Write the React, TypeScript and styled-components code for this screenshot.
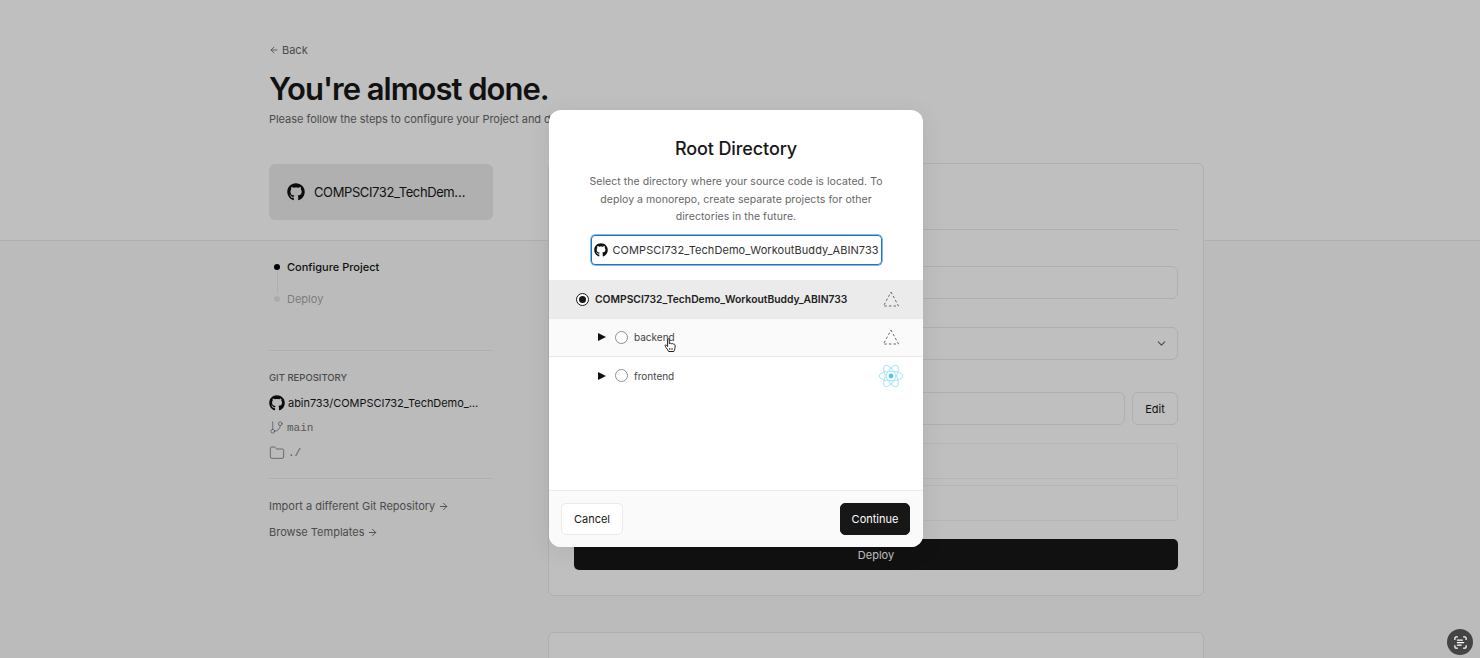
import React from 'react';
import styled, { createGlobalStyle } from 'styled-components';
import { FaGithub } from 'react-icons/fa';
import { ArrowLeft, ArrowRight, ChevronDown, Folder, GitBranch, ScanText } from 'lucide-react';

const GlobalStyle = createGlobalStyle`
  html, body {
    margin: 0;
    height: 100%;
    overflow: hidden;
    background: #fafafa;
    font-family: Inter, "Liberation Sans", sans-serif;
    color: #171717;
  }
`;

const Page = styled.div`
  height: 658px;
  overflow: hidden;
  position: relative;
`;

const Band = styled.header`
  height: 241px;
  box-sizing: border-box;
  background: #fff;
  border-bottom: 1px solid #eaeaea;
`;

const Container = styled.div`
  width: 935px;
  margin-left: 269px;
`;

const BandInner = styled(Container)`
  padding-top: 43px;
`;

const BackLink = styled.a`
  display: flex;
  align-items: center;
  gap: 3px;
  height: 14px;
  font-size: 11px;
  color: #666;
`;

const Title = styled.h1`
  margin: 14px 0 0;
  font-size: 31px;
  line-height: 36px;
  font-weight: 600;
  letter-spacing: -1px;
  color: #171717;
`;

const Lead = styled.p`
  margin: 4px 0 0;
  font-size: 11px;
  line-height: 16px;
  color: #666;
  letter-spacing: -0.04px;
`;

const Columns = styled(Container)`
  display: grid;
  grid-template-columns: 224px 656px;
  column-gap: 55px;
  margin-top: -78px;
`;

const Sidebar = styled.aside`
  display: flex;
  flex-direction: column;
  margin-top: 1px;
`;

const ProjectCard = styled.div`
  height: 56px;
  display: flex;
  align-items: center;
  gap: 9px;
  padding-left: 18px;
  border-radius: 6px;
  background: #ebebeb;
  font-size: 13px;
  letter-spacing: -0.4px;
  color: #171717;
`;

const Steps = styled.ol`
  list-style: none;
  margin: 39px 0 0;
  padding: 0 0 0 5px;
`;

const Step = styled.li<{ $active?: boolean }>`
  position: relative;
  display: flex;
  align-items: center;
  gap: 7px;
  height: 16px;
  font-size: 11px;
  font-weight: ${p => (p.$active ? 500 : 400)};
  color: ${p => (p.$active ? '#171717' : '#a8a8a8')};
  & + & {
    margin-top: 16px;
  }
  &::before {
    content: '';
    width: 6px;
    height: 6px;
    border-radius: 50%;
    background: ${p => (p.$active ? '#000' : '#e6e6e6')};
  }
  &:first-child::after {
    content: '';
    position: absolute;
    left: 3px;
    top: 12px;
    width: 1px;
    height: 22px;
    background: #eaeaea;
  }
`;

const Divider = styled.hr<{ $top: number }>`
  width: 100%;
  margin: ${p => p.$top}px 0 0;
  border: 0;
  border-top: 1px solid #eaeaea;
`;

const SmallHeading = styled.h3`
  margin: 20px 0 2px;
  font-size: 9.5px;
  line-height: 13px;
  font-weight: 500;
  color: #666;
`;

const MetaRow = styled.div<{ $mono?: boolean; $strong?: boolean }>`
  display: flex;
  align-items: center;
  gap: 3px;
  height: 17px;
  margin-top: 8px;
  font-size: 11px;
  letter-spacing: ${p => (p.$strong ? '-0.05px' : '0')};
  color: ${p => (p.$strong ? '#171717' : '#777')};
  font-family: ${p => (p.$mono ? '"Liberation Mono", monospace' : 'inherit')};
  svg {
    flex: none;
    color: ${p => (p.$strong ? '#111' : '#666')};
  }
`;

const SideLink = styled.a<{ $gap: number }>`
  display: flex;
  align-items: center;
  gap: 3px;
  height: 16px;
  margin-top: ${p => p.$gap}px;
  font-size: 11px;
  color: #666;
`;

const Main = styled.main`
  display: flex;
  flex-direction: column;
`;

const Panel = styled.section`
  box-sizing: border-box;
  height: 433px;
  padding: 0 25px;
  background: #fff;
  border: 1px solid #eaeaea;
  border-radius: 6px;
  display: flex;
  flex-direction: column;
`;

const PanelRule = styled.div`
  margin-top: 65px;
  border-top: 1px solid #eaeaea;
`;

const Field = styled.div<{ $top: number; $height?: number; $radius?: number; $faint?: boolean }>`
  box-sizing: border-box;
  flex: 1;
  height: ${p => p.$height ?? 33}px;
  margin-top: ${p => p.$top}px;
  display: flex;
  align-items: center;
  justify-content: flex-end;
  padding-right: 9px;
  border: 1px solid ${p => (p.$faint ? '#f2f2f2' : '#eaeaea')};
  border-radius: ${p => p.$radius ?? 6}px;
  color: #666;
`;

const FieldRow = styled.div`
  display: flex;
  gap: 7px;
  align-items: flex-end;
`;

const EditButton = styled.button`
  box-sizing: border-box;
  width: 46px;
  height: 33px;
  padding: 0;
  font: 400 11px Inter, sans-serif;
  color: #171717;
  background: transparent;
  border: 1px solid #eaeaea;
  border-radius: 6px;
`;

const DeployButton = styled.button`
  height: 31px;
  margin-top: 18px;
  font: 400 11px Inter, sans-serif;
  color: #fff;
  background: #171717;
  border: 0;
  border-radius: 5px;
`;

const SecondPanel = styled(Panel)`
  margin-top: 36px;
  height: 200px;
`;

const Overlay = styled.div`
  position: absolute;
  inset: 0;
  display: flex;
  align-items: center;
  justify-content: center;
  padding: 0 8px 1px 0;
  background: rgba(0, 0, 0, 0.25);
`;

const Modal = styled.div`
  width: 374px;
  height: 437px;
  display: flex;
  flex-direction: column;
  overflow: hidden;
  background: #fff;
  border-radius: 12px;
  box-shadow: 0 4px 24px rgba(0, 0, 0, 0.08);
`;

const ModalHead = styled.div`
  padding: 26px 38px 0;
  display: flex;
  flex-direction: column;
  align-items: center;
`;

const ModalTitle = styled.h2`
  margin: 0;
  font-size: 18px;
  line-height: 26px;
  font-weight: 500;
  letter-spacing: -0.1px;
  color: #171717;
`;

const ModalText = styled.p`
  margin: 11px 0 0;
  font-size: 10.5px;
  line-height: 17.5px;
  text-align: center;
  color: #666;
  letter-spacing: 0.06px;
`;

const RootInput = styled.div`
  box-sizing: border-box;
  width: 291px;
  height: 30px;
  margin-top: 9px;
  display: flex;
  align-items: center;
  gap: 5px;
  padding-left: 2px;
  border: 1px solid #1a73c8;
  box-shadow: 0 0 0 0.5px #1a73c8;
  border-radius: 4px;
  font-size: 11px;
  letter-spacing: 0.07px;
  white-space: nowrap;
  color: #333;
  svg {
    flex: none;
    color: #111;
  }
`;

const DirList = styled.ul`
  flex: 1;
  list-style: none;
  margin: 15px 0 0;
  padding: 0;
`;

const DirRow = styled.li<{ $tone: 'selected' | 'hover' | 'plain'; $nested?: boolean }>`
  position: relative;
  box-sizing: border-box;
  height: ${p => (p.$nested ? 38 : 39)}px;
  display: flex;
  align-items: center;
  padding: 0 24px 0 ${p => (p.$nested ? 49 : 27)}px;
  background: ${p => (p.$tone === 'selected' ? '#ebebeb' : p.$tone === 'hover' ? '#fafafa' : '#fff')};
  border-bottom: ${p => (p.$tone === 'hover' ? '1px solid #eaeaea' : '0')};
`;

const Caret = styled.span`
  width: 0;
  height: 0;
  margin-right: 9px;
  border-left: 8px solid #111;
  border-top: 4.5px solid transparent;
  border-bottom: 4.5px solid transparent;
`;

const Radio = styled.span<{ $checked?: boolean }>`
  box-sizing: border-box;
  flex: none;
  width: 13px;
  height: 13px;
  display: flex;
  align-items: center;
  justify-content: center;
  border-radius: 50%;
  border: 1px solid ${p => (p.$checked ? '#171717' : '#8f8f8f')};
  background: #fff;
  &::after {
    content: '';
    display: ${p => (p.$checked ? 'block' : 'none')};
    width: 7px;
    height: 7px;
    border-radius: 50%;
    background: #171717;
  }
`;

const DirName = styled.span<{ $strong?: boolean }>`
  flex: 1;
  margin-left: 6px;
  font-size: ${p => (p.$strong ? 10.3 : 10)}px;
  font-weight: ${p => (p.$strong ? 600 : 400)};
  color: ${p => (p.$strong ? '#222' : '#444')};
`;

const RowIcon = styled.span`
  width: 16px;
  display: flex;
  justify-content: center;
  svg {
    flex: none;
  }
`;

const Cursor = styled.svg`
  position: absolute;
  left: 115px;
  top: 19px;
`;

const ModalFoot = styled.footer`
  box-sizing: border-box;
  height: 57px;
  display: flex;
  align-items: center;
  justify-content: space-between;
  padding: 0 13px 0 12px;
  background: #fafafa;
  border-top: 1px solid #eaeaea;
`;

const FootButton = styled.button<{ $primary?: boolean }>`
  height: 32px;
  padding: 0;
  width: ${p => (p.$primary ? 70 : 62)}px;
  font: 400 11px Inter, sans-serif;
  color: ${p => (p.$primary ? '#fff' : '#171717')};
  background: ${p => (p.$primary ? '#171717' : '#fff')};
  border: 1px solid ${p => (p.$primary ? '#171717' : '#eaeaea')};
  border-radius: 5px;
`;

const Bubble = styled.div`
  position: absolute;
  left: 1447px;
  top: 629px;
  width: 26px;
  height: 26px;
  display: flex;
  align-items: center;
  justify-content: center;
  border-radius: 50%;
  background: #444;
  color: #fff;
`;

const VercelMark = () => (
  <RowIcon>
    <svg width="16" height="16" viewBox="0 0 16 16" fill="none">
      <path d="M8 1 L15.5 15 H0.5 Z" stroke="#666" strokeWidth="1" strokeDasharray="2.4 2.2" />
    </svg>
  </RowIcon>
);

const ReactMark = () => (
  <RowIcon>
    <svg width="26" height="26" viewBox="0 0 26 26" fill="none" stroke="#a6e4f8" strokeWidth="1">
      <ellipse cx="13" cy="13" rx="12" ry="4.8" />
      <ellipse cx="13" cy="13" rx="12" ry="4.8" transform="rotate(60 13 13)" />
      <ellipse cx="13" cy="13" rx="12" ry="4.8" transform="rotate(120 13 13)" />
      <circle cx="13" cy="13" r="2.4" fill="#58c4ef" stroke="none" />
    </svg>
  </RowIcon>
);

const HandCursor = () => (
  <Cursor width="13" height="15" viewBox="0 0 13 15">
    <path
      d="M3.6 1.6c0-1.1 1.7-1.1 1.7 0v4l.9-.3c.5-.1 1 .1 1.1.4l.9-.1c.5 0 .9.2 1 .5.9-.2 1.8.2 1.9 1.2.1 1.5 0 3.3-.6 4.6-.3.7-.6 1.1-.7 1.6H4.6c-.3-1-1.2-2-2.3-3.6C1.5 8.7.8 7.7 1.1 7.2c.4-.6 1.3-.2 2.5 1.4Z"
      fill="#fff"
      stroke="#222"
      strokeWidth="1"
      strokeLinejoin="round"
    />
    <path d="M5.8 10v2M8 10v2" stroke="#222" strokeWidth="0.9" />
  </Cursor>
);

export default function App() {
  return (
    <Page>
      <GlobalStyle />
      <Band>
        <BandInner>
          <BackLink>
            <ArrowLeft size={10} /> Back
          </BackLink>
          <Title>You're almost done.</Title>
          <Lead>Please follow the steps to configure your Project and deploy it.</Lead>
        </BandInner>
      </Band>
      <Columns>
        <Sidebar>
          <ProjectCard>
            <FaGithub size={18} color="#111" />
            COMPSCI732_TechDem…
          </ProjectCard>
          <Steps>
            <Step $active>Configure Project</Step>
            <Step>Deploy</Step>
          </Steps>
          <Divider $top={43} />
          <SmallHeading>GIT REPOSITORY</SmallHeading>
          <MetaRow $strong>
            <FaGithub size={16} />
            abin733/COMPSCI732_TechDemo_…
          </MetaRow>
          <MetaRow $mono>
            <GitBranch size={15} strokeWidth={1.1} />
            main
          </MetaRow>
          <MetaRow $mono>
            <Folder size={16} strokeWidth={1.1} />
            ./
          </MetaRow>
          <Divider $top={17} />
          <SideLink $gap={19}>
            Import a different Git Repository <ArrowRight size={11} />
          </SideLink>
          <SideLink $gap={10}>
            Browse Templates <ArrowRight size={11} />
          </SideLink>
        </Sidebar>
        <Main>
          <Panel>
            <PanelRule />
            <FieldRow>
              <Field $top={36} />
            </FieldRow>
            <FieldRow>
              <Field $top={28}>
                <ChevronDown size={13} />
              </Field>
            </FieldRow>
            <FieldRow>
              <Field $top={32} />
              <EditButton>Edit</EditButton>
            </FieldRow>
            <FieldRow>
              <Field $top={18} $height={36} $radius={3} $faint />
            </FieldRow>
            <FieldRow>
              <Field $top={6} $height={36} $radius={3} $faint />
            </FieldRow>
            <DeployButton>Deploy</DeployButton>
          </Panel>
          <SecondPanel />
        </Main>
      </Columns>
      <Overlay>
        <Modal>
          <ModalHead>
            <ModalTitle>Root Directory</ModalTitle>
            <ModalText>
              Select the directory where your source code is located. To deploy a monorepo, create separate
              projects for other directories in the future.
            </ModalText>
            <RootInput>
              <FaGithub size={14} />
              COMPSCI732_TechDemo_WorkoutBuddy_ABIN733
            </RootInput>
          </ModalHead>
          <DirList>
            <DirRow $tone="selected">
              <Radio $checked />
              <DirName $strong>COMPSCI732_TechDemo_WorkoutBuddy_ABIN733</DirName>
              <VercelMark />
            </DirRow>
            <DirRow $tone="hover" $nested>
              <Caret />
              <Radio />
              <DirName>backend</DirName>
              <VercelMark />
              <HandCursor />
            </DirRow>
            <DirRow $tone="plain" $nested>
              <Caret />
              <Radio />
              <DirName>frontend</DirName>
              <ReactMark />
            </DirRow>
          </DirList>
          <ModalFoot>
            <FootButton>Cancel</FootButton>
            <FootButton $primary>Continue</FootButton>
          </ModalFoot>
        </Modal>
      </Overlay>
      <Bubble>
        <ScanText size={15} />
      </Bubble>
    </Page>
  );
}
